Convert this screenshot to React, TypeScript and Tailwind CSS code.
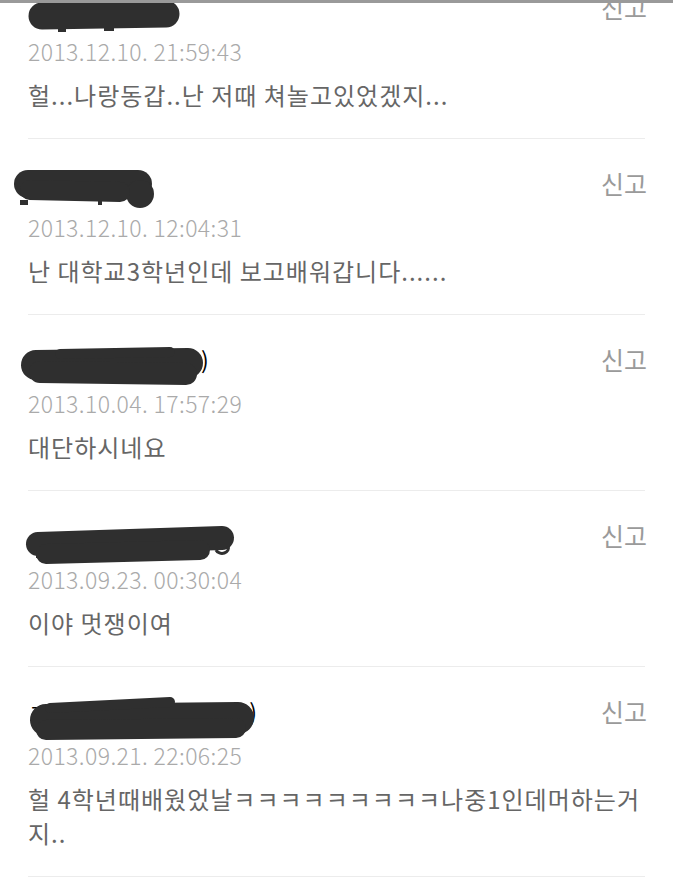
type Comment = {
  date: string;
  text: string;
  blob: React.ReactNode;
  name?: React.ReactNode;
};

const ink = "#2f2f2f";

const comments: Comment[] = [
  {
    date: "2013.12.10. 21:59:43",
    text: "헐...나랑동갑..난 저때 쳐놀고있었겠지...",
    blob: (
      <>
        <path d="M42 24 L166 22" stroke={ink} strokeWidth="27" strokeLinecap="round" />
        <rect x="58" y="36" width="8" height="4" fill={ink} />
        <rect x="104" y="36" width="10" height="3" fill={ink} />
      </>
    ),
  },
  {
    date: "2013.12.10. 12:04:31",
    text: "난 대학교3학년인데 보고배워갑니다......",
    blob: (
      <>
        <path d="M28 16 L138 16" stroke={ink} strokeWidth="28" strokeLinecap="round" />
        <circle cx="140" cy="26" r="14" fill={ink} />
        <path d="M30 22 L120 24" stroke={ink} strokeWidth="20" strokeLinecap="round" />
        <rect x="20" y="32" width="8" height="5" fill={ink} />
        <rect x="98" y="30" width="4" height="7" fill={ink} />
      </>
    ),
  },
  {
    date: "2013.10.04. 17:57:29",
    text: "대단하시네요",
    name: <span className="ml-[173px]">)</span>,
    blob: (
      <>
        <path d="M36 21 L188 19" stroke={ink} strokeWidth="30" strokeLinecap="round" />
        <path d="M60 10 L170 8" stroke={ink} strokeWidth="10" strokeLinecap="round" />
        <path d="M40 28 L186 30" stroke={ink} strokeWidth="22" strokeLinecap="round" />
      </>
    ),
  },
  {
    date: "2013.09.23. 00:30:04",
    text: "이야 멋쟁이여",
    blob: (
      <>
        <path d="M38 24 L222 18" stroke={ink} strokeWidth="24" strokeLinecap="round" />
        <path d="M46 34 L200 30" stroke={ink} strokeWidth="20" strokeLinecap="round" />
        <path d="M216 30 a6 5 0 0 0 12 -4" stroke={ink} strokeWidth="3" fill="none" />
        <rect x="36" y="32" width="6" height="6" fill={ink} />
      </>
    ),
  },
  {
    date: "2013.09.21. 22:06:25",
    text: "헐 4학년때배웠었날ㅋㅋㅋㅋㅋㅋㅋㅋㅋ나중1인데머하는거지..",
    name: (
      <>
        <span>ㄱ</span>
        <span className="ml-[200px]">)</span>
      </>
    ),
    blob: (
      <>
        <path d="M46 24 L238 22" stroke={ink} strokeWidth="32" strokeLinecap="round" />
        <path d="M50 12 L170 6" stroke={ink} strokeWidth="10" strokeLinecap="round" />
        <path d="M46 34 L236 32" stroke={ink} strokeWidth="20" strokeLinecap="round" />
      </>
    ),
  },
];

function CommentItem({ c }: { c: Comment }) {
  return (
    <div className="border-b border-[#ececec] pt-[29px] pb-[26px]">
      <div className="relative flex h-[30px] items-center justify-between">
        <div className="text-[23px] leading-[30px] text-black">{c.name}</div>
        <svg
          className="absolute left-[-28px] top-0"
          width="300"
          height="50"
          viewBox="0 0 300 50"
        >
          {c.blob}
        </svg>
        <span className="-mr-[2px] text-[25px] leading-[30px] text-[#9a9a9a]">신고</span>
      </div>
      <div className="mt-[14px] text-[23px] font-light leading-[30px] tracking-[0.4px] text-[#aaa]">
        {c.date}
      </div>
      <p className="mt-[12px] text-[24px] leading-[34px] tracking-[1px] text-[#666]">{c.text}</p>
    </div>
  );
}

export default function App() {
  return (
    <div
      className="relative h-[878px] w-[673px] overflow-hidden bg-white"
      style={{ fontFamily: '"Noto Sans CJK KR", "Noto Sans", sans-serif' }}
    >
      <div className="-mt-[37px] px-[28px]">
        {comments.map((c) => (
          <CommentItem key={c.date} c={c} />
        ))}
      </div>
      <div className="absolute inset-x-0 top-0 h-[3px] bg-[#9a9a9a]" />
    </div>
  );
}
